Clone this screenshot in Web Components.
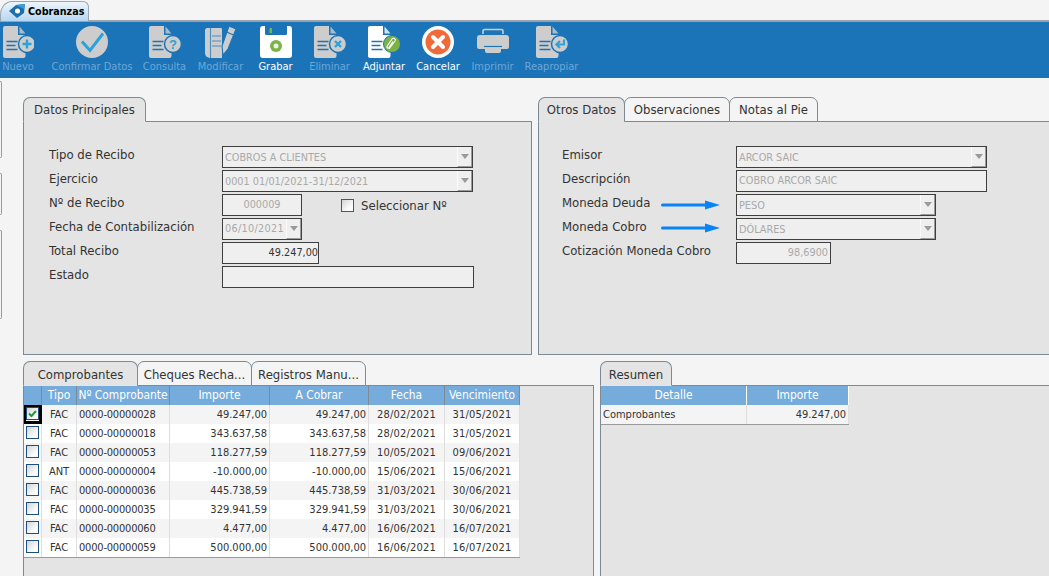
<!DOCTYPE html>
<html>
<head>
<meta charset="utf-8">
<style>
  html, body { margin: 0; height: 576px; overflow: hidden; background: #f4f4f4; }
  body { font: 13px "DejaVu Sans Condensed", "DejaVu Sans", sans-serif; color: #333; }
</style>
</head>
<body>
<app-shell></app-shell>
<script>
const ICON = {
  doc: (badge, fill = "#cdcdcd", line = "#1c74b8") => `
    <svg width="32" height="32" viewBox="0 0 32 32">
      <path d="M2 0H15V9H22.500V30a2 2 0 0 1-2 2H2a2 2 0 0 1-2-2V2a2 2 0 0 1 2-2z" fill="${fill}"/>
      <path d="M16.500 .5l6 7h-6z" fill="${fill}" opacity=".8"/>
      <path d="M3.500 15.500h11M3.500 19.500h9M3.500 23.500h11" stroke="${line}" stroke-width="1.300"/>
      ${badge}
    </svg>`,
  badge: (inner, c = "#cdcdcd") => `<circle cx="24" cy="18" r="8.500" fill="${c}" stroke="#1c74b8" stroke-width="1.500"/>${inner}`,
};
const ICONS = {
  nuevo: ICON.doc(ICON.badge(`<path d="M24 13.500v9M19.500 18h9" stroke="#2aa3dc" stroke-width="2.400"/>`)).replace("0 0 32 32", "-1 0 32 32"),
  confirmar: `<svg width="32" height="32" viewBox="0 0 32 32"><circle cx="16" cy="16" r="16" fill="#cdcdcd"/><path d="M6 15.500l8 9L27 7.500" fill="none" stroke="#2aa3dc" stroke-width="3"/></svg>`,
  consulta: ICON.doc(ICON.badge(`<text x="24" y="22.500" font-size="13" font-weight="700" font-family="Liberation Sans" text-anchor="middle" fill="#2aa3dc">?</text>`)),
  modificar: `<svg width="32" height="32" viewBox="0 0 32 32">
      <path d="M1.500 2H16a1 1 0 0 1 1 1v29H5a5 5 0 0 1-5-5V3.500z" fill="#cdcdcd"/>
      <path d="M5.500 2v30M7 10h9M7 15h9M7 20h9" stroke="#1c74b8" stroke-width="1.100" opacity=".7"/>
      <path d="M24 0l7 3-8 20-5 6-1-9z" fill="#cdcdcd" stroke="#1c74b8" stroke-width="1.100"/>
      <path d="M21.500 6l7 3" stroke="#1c74b8" stroke-width="1.100"/>
    </svg>`,
  grabar: `<svg width="32" height="32" viewBox="0 0 32 32">
      <path d="M3 0H5V7.500A1.500 1.500 0 0 0 6.500 9h19A1.500 1.500 0 0 0 27 7.500V0h2a3 3 0 0 1 3 3v26a3 3 0 0 1-3 3H3a3 3 0 0 1-3-3V3a3 3 0 0 1 3-3z" fill="#fff"/>
      <rect x="9.500" y="2" width="2.500" height="5" fill="#7cb342"/>
      <circle cx="16" cy="20" r="6" fill="#7cb342"/><circle cx="16" cy="20" r="2.500" fill="#eee"/>
    </svg>`,
  eliminar: ICON.doc(ICON.badge(`<path d="M21 15l6 6M27 15l-6 6" stroke="#2aa3dc" stroke-width="2.400"/>`)),
  adjuntar: ICON.doc(`<circle cx="24" cy="18" r="8.500" fill="#7cb342" stroke="#1c74b8" stroke-width="1"/><path d="M21 23l6-8a1.800 1.800 0 0 0-3-2l-5 7.500a1 1 0 0 0 2 1l4-6" fill="none" stroke="#fff" stroke-width="1.100"/>`, "#fff"),
  cancelar: `<svg width="32" height="32" viewBox="0 0 32 32"><circle cx="16" cy="16" r="16" fill="#fff"/><circle cx="16" cy="16" r="12.500" fill="#f26a3a"/><path d="M11 11l10 10M21 11L11 21" stroke="#fff" stroke-width="4" stroke-linecap="round"/></svg>`,
  imprimir: `<svg width="32" height="32" viewBox="0 0 32 32">
      <path d="M6 8V5A1.500 1.500 0 0 1 7.500 3.500h17A1.500 1.500 0 0 1 26 5v3" fill="none" stroke="#cdcdcd" stroke-width="1.600"/>
      <path d="M3 9h26a3 3 0 0 1 3 3v9a2 2 0 0 1-2 2H2a2 2 0 0 1-2-2V12a3 3 0 0 1 3-3z" fill="#cdcdcd"/>
      <path d="M7 20.500h18" stroke="#1c74b8" stroke-width="1.200"/>
      <path d="M8 21.500h16V25a2 2 0 0 1-2 2H10a2 2 0 0 1-2-2z" fill="#cdcdcd"/>
    </svg>`,
  reapropiar: ICON.doc(ICON.badge(`<path d="M28 13.500v5h-7M24 15l-3.500 3.500 3.500 3.500" fill="none" stroke="#2aa3dc" stroke-width="2.200"/>`)),
};

class ToolButton extends HTMLElement {
  constructor() {
    super();
    const on = this.hasAttribute("on");
    this.attachShadow({ mode: "open" }).innerHTML = `
      <style>
        :host { display: flex; flex-direction: column; align-items: center; width: var(--w); margin-left: var(--m, 0); }
        .ic { height: 32px; display: flex; justify-content: center; }
        .lb { font-size: 11px; line-height: 13px; margin-top: 2px; white-space: nowrap; color: ${on ? "#fff" : "#6ca6d6"}; }
      </style>
      <div class="ic">${ICONS[this.getAttribute("icon")]}</div>
      <div class="lb"><slot></slot></div>`;
  }
}
customElements.define("tool-button", ToolButton);

class TabPanel extends HTMLElement {
  constructor() {
    super();
    const tabs = (this.getAttribute("tabs") || "").split("|");
    const html = tabs.map((t, i) => {
      const [txt, w] = t.split(":");
      return `<div class="tab ${i == 0 ? "on" : ""}" style="width:${w}px">${txt}</div>`;
    }).join("");
    this.attachShadow({ mode: "open" }).innerHTML = `
      <style>
        :host { display: flex; flex-direction: column; min-width: 0; }
        .tabs { display: flex; height: 24px; position: relative; z-index: 1; flex: none; }
        .tab { box-sizing: border-box; height: 25px; border: 1px solid #7b8a94; border-radius: 7px 7px 0 0; background: #f4f4f4; text-align: center; line-height: var(--tl, 23px); white-space: nowrap; margin-right: -1px; }
        .tab.on { background: #e4e4e4; border-bottom-color: #e4e4e4; }
        .body { flex: 1; border: 1px solid #7b8a94; background: #e4e4e4; min-height: 0; }
      </style>
      <div class="tabs">${html}</div>
      <div class="body"><slot></slot></div>`;
  }
}
customElements.define("tab-panel", TabPanel);

class FormField extends HTMLElement {
  constructor() {
    super();
    const combo = this.hasAttribute("combo");
    this.attachShadow({ mode: "open" }).innerHTML = `
      <style>
        :host { display: flex; box-sizing: border-box; height: 22px; border: 1px solid #3f3f3f; background: #efefef; color: #a9a9a9; font-size: 10.800px; line-height: var(--lh, ${combo ? "22px" : "20px"}); overflow: hidden; }
        .v { flex: 1; padding: 0 var(--pr, 2px) 0 2px; white-space: nowrap; overflow: hidden; text-align: var(--al, left); }
        .b { flex: none; box-sizing: border-box; width: 15px; background: #efefef; border-left: 1px solid #fbfbfb; border-bottom: 1px solid #9b9b9b; border-right: 1px solid #9b9b9b; display: ${combo ? "flex" : "none"}; align-items: center; justify-content: center; }
        .b i { width: 0; height: 0; border: 4px solid transparent; border-top: 5px solid #9a9a9a; border-bottom: 0; }
      </style>
      <div class="v"><slot></slot></div><div class="b"><i></i></div>`;
  }
}
customElements.define("form-field", FormField);

class FormRow extends HTMLElement {
  constructor() {
    super();
    this.attachShadow({ mode: "open" }).innerHTML = `
      <style>
        :host { display: flex; height: 22px; }
        .l { flex: none; width: var(--lw); line-height: 18px; position: relative; white-space: nowrap; }
        .f { flex: none; width: var(--fw); }
        .x { margin-left: 39px; }
      </style>
      <div class="l">${this.getAttribute("label")}<slot name="over"></slot></div>
      <div class="f"><slot></slot></div>
      <div class="x"><slot name="extra"></slot></div>`;
  }
}
customElements.define("form-row", FormRow);

class BlueArrow extends HTMLElement {
  constructor() {
    super();
    this.attachShadow({ mode: "open" }).innerHTML = `
      <style>:host { position: absolute; left: 99px; top: var(--t, 3px); width: 60px; height: 10px; }</style>
      <svg width="60" height="10" viewBox="0 0 60 10"><path d="M1.500 3.500H44V.5L59 5 44 9.500v-3H1.500a1.500 1.500 0 0 1 0-3z" fill="#0a84f5"/></svg>`;
  }
}
customElements.define("blue-arrow", BlueArrow);

class CheckBox extends HTMLElement {
  constructor() {
    super();
    const on = this.hasAttribute("checked");
    this.attachShadow({ mode: "open" }).innerHTML = `
      <style>
        :host { display: block; box-sizing: border-box; width: 13px; height: 13px; border: 1px solid var(--bc, #1a4f80); background: linear-gradient(135deg, #d4d4d4, #fbfbfb 70%); }
        svg { display: block; }
      </style>
      ${on ? `<svg width="11" height="11" viewBox="0 0 11 11"><path d="M2 5.500l2.500 2.500L9 3" fill="none" stroke="#1f9a33" stroke-width="2"/></svg>` : ""}`;
  }
}
customElements.define("check-box", CheckBox);

class DataGrid extends HTMLElement {
  constructor() {
    super();
    const cols = JSON.parse(this.getAttribute("cols"));
    const rows = JSON.parse(this.getAttribute("rows"));
    const head = cols.map(c => `<div class="h">${c.t}</div>`).join("");
    const body = rows.map((r, i) => cols.map((c, j) => {
      if (c.check) return `<div class="c k ${i % 2 ? "" : "alt"} ${r[j] ? "focus" : ""}"><check-box ${r[j] ? "checked" : ""}></check-box></div>`;
      return `<div class="c ${i % 2 ? "" : "alt"}" style="text-align:${c.a || "left"};letter-spacing:${c.ls || 0}px">${r[j]}</div>`;
    }).join("")).join("");
    this.attachShadow({ mode: "open" }).innerHTML = `
      <style>
        :host { display: block; }
        .g { display: inline-grid; grid-template-columns: ${cols.map(c => c.w + "px").join(" ")}; grid-auto-rows: 19px; border-bottom: 1px solid #9a9a9a; vertical-align: top; }
        .h { background: #75acdb; color: #fff; text-align: center; line-height: 19px; border-right: 1px solid var(--sep, #7b8a94); box-sizing: border-box; white-space: nowrap; font-size: 11.900px; }
        .c { box-sizing: border-box; background: #fff; border-right: 1px solid #dedede; line-height: 20px; padding: 0 2px; white-space: nowrap; font-size: 11px; overflow: hidden; }
        .c.alt { background: #f4f4f4; }
        .k { padding: 2px 0 0 2px; }
        .k.focus { border: 3px solid #000; border-width: 2px 3px 3px 2px; padding: 0; }
      </style>
      <div class="g">${head}${body}</div>`;
  }
}
customElements.define("data-grid", DataGrid);

class AppShell extends HTMLElement {
  constructor() {
    super();
    const rows = [
      [1,"FAC","0000-00000028","49.247,00","49.247,00","28/02/2021","31/05/2021"],
      [0,"FAC","0000-00000018","343.637,58","343.637,58","28/02/2021","31/05/2021"],
      [0,"FAC","0000-00000053","118.277,59","118.277,59","10/05/2021","09/06/2021"],
      [0,"ANT","0000-00000004","-10.000,00","-10.000,00","15/06/2021","15/06/2021"],
      [0,"FAC","0000-00000036","445.738,59","445.738,59","31/03/2021","30/06/2021"],
      [0,"FAC","0000-00000035","329.941,59","329.941,59","31/03/2021","30/06/2021"],
      [0,"FAC","0000-00000060","4.477,00","4.477,00","16/06/2021","16/07/2021"],
      [0,"FAC","0000-00000059","500.000,00","500.000,00","16/06/2021","16/07/2021"],
    ];
    const cols = [
      {t:"",w:18,check:1},{t:"Tipo",w:35,a:"center"},{t:"Nº Comprobante",w:93,ls:-.2},{t:"Importe",w:100,a:"right"},
      {t:"A Cobrar",w:99,a:"right"},{t:"Fecha",w:76,a:"center",ls:.2},{t:"Vencimiento",w:75,a:"center",ls:.2},
    ];
    const resCols = [{t:"Detalle",w:146},{t:"Importe",w:102,a:"right"}];
    const resRows = [["Comprobantes","49.247,00"]];
    this.attachShadow({ mode: "open" }).innerHTML = `
      <style>
        :host { display: block; height: 576px; overflow: hidden; }
        .top { height: 20px; display: flex; background: #f4f4f4; }
        .doc { box-sizing: border-box; width: 89px; height: 20px; margin-top: 1px; border: 1px solid #9aa6b0; border-bottom: 0; border-radius: 12px 6px 0 0 / 14px 6px 0 0; background: linear-gradient(#eef5fb, #b6d6f2); display: flex; align-items: center; gap: 3px; padding-left: 8px; font-weight: 700; font-size: 10.700px; color: #000; }
        .bar { border-top: 2px solid #9aa3ab; background: #1c74b8; display: flex; padding-top: 4px; height: 52px; }
        .content { display: flex; width: 1200px; }
        .rail { flex: none; width: 23px; padding-top: 3px; box-sizing: border-box; display: flex; flex-direction: column; gap: 15px; }
        .rail i { display: block; width: 2px; border: 1px solid #9a9a9a; border-left: 0; border-radius: 0 3px 3px 0; box-sizing: border-box; }
        .main { display: grid; grid-template-columns: 509px 520px; column-gap: 6px; padding-top: 19px; height: 277px; box-sizing: border-box; }
        .low { display: grid; grid-template-columns: 571px 500px; column-gap: 6px; padding-top: 6px; height: 260px; box-sizing: border-box; --tl: 25px; }
        .form { padding: 24px 0 0 25px; display: flex; flex-direction: column; gap: 2px; --lw: 173px; }
        .form.r { padding-left: 23px; --lw: 174px; }
        .cb { display: flex; align-items: center; gap: 7px; height: 22px; white-space: nowrap; }
      </style>
      <div class="top">
        <div class="doc">
          <svg width="16" height="15" viewBox="0 0 16 15"><path d="M0 7L7 1l9-1-1 9-7 5z" fill="#1c6fa8"/><path d="M7 1l9-1-1 5z" fill="#3f9bd6"/><circle cx="8.500" cy="7" r="2.500" fill="#fff"/></svg>
          Cobranzas
        </div>
      </div>
      <div class="bar">
        <tool-button icon="nuevo" style="--w:30px;--m:3px">Nuevo</tool-button>
        <tool-button icon="confirmar" style="--w:82px;--m:18px">Confirmar Datos</tool-button>
        <tool-button icon="consulta" style="--w:43px;--m:10px">Consulta</tool-button>
        <tool-button icon="modificar" style="--w:47px;--m:11px">Modificar</tool-button>
        <tool-button icon="grabar" on style="--w:35px;--m:14px">Grabar</tool-button>
        <tool-button icon="eliminar" style="--w:39px;--m:17px">Eliminar</tool-button>
        <tool-button icon="adjuntar" on style="--w:44px;--m:13px">Adjuntar</tool-button>
        <tool-button icon="cancelar" on style="--w:44px;--m:10px">Cancelar</tool-button>
        <tool-button icon="imprimir" style="--w:41px;--m:12px">Imprimir</tool-button>
        <tool-button icon="reapropiar" style="--w:55px;--m:11px">Reapropiar</tool-button>
      </div>
      <div class="content">
        <div class="rail"><i style="height:77px"></i><i style="height:42px"></i><i style="height:89px"></i></div>
        <div>
          <div class="main">
            <tab-panel tabs="Datos Principales:123">
              <div class="form">
                <form-row label="Tipo de Recibo" style="--fw:251px"><form-field combo>COBROS A CLIENTES</form-field></form-row>
                <form-row label="Ejercicio" style="--fw:251px"><form-field combo>0001 01/01/2021-31/12/2021</form-field></form-row>
                <form-row label="Nº de Recibo" style="--fw:80px"><form-field style="--al:center">000009</form-field>
                  <div slot="extra" class="cb"><check-box style="--bc:#555"></check-box>Seleccionar Nº</div></form-row>
                <form-row label="Fecha de Contabilización" style="--fw:80px"><form-field combo style="--lh:20px;--pr:0;letter-spacing:.3px">06/10/2021</form-field></form-row>
                <form-row label="Total Recibo" style="--fw:97px"><form-field style="--al:right;--pr:0;color:#333">49.247,00</form-field></form-row>
                <form-row label="Estado" style="--fw:252px"><form-field></form-field></form-row>
              </div>
            </tab-panel>
            <tab-panel tabs="Otros Datos:87|Observaciones:106|Notas al Pie:89">
              <div class="form r">
                <form-row label="Emisor" style="--fw:251px"><form-field combo>ARCOR SAIC</form-field></form-row>
                <form-row label="Descripción" style="--fw:251px"><form-field>COBRO ARCOR SAIC</form-field></form-row>
                <form-row label="Moneda Deuda" style="--fw:200px"><blue-arrow slot="over"></blue-arrow><form-field combo>PESO</form-field></form-row>
                <form-row label="Moneda Cobro" style="--fw:200px"><blue-arrow slot="over" style="--t:2px"></blue-arrow><form-field combo>DÓLARES</form-field></form-row>
                <form-row label="Cotización Moneda Cobro" style="--fw:95px"><form-field style="--al:right">98,6900</form-field></form-row>
              </div>
            </tab-panel>
          </div>
          <div class="low">
            <tab-panel tabs="Comprobantes:115|Cheques Recha...:115|Registros Manu...:115">
              <data-grid cols='${JSON.stringify(cols)}' rows='${JSON.stringify(rows)}'></data-grid>
            </tab-panel>
            <tab-panel tabs="Resumen:72">
              <data-grid style="--sep:#fff" cols='${JSON.stringify(resCols)}' rows='${JSON.stringify(resRows)}'></data-grid>
            </tab-panel>
          </div>
        </div>
      </div>`;
  }
}
customElements.define("app-shell", AppShell);
</script>
</body>
</html>
